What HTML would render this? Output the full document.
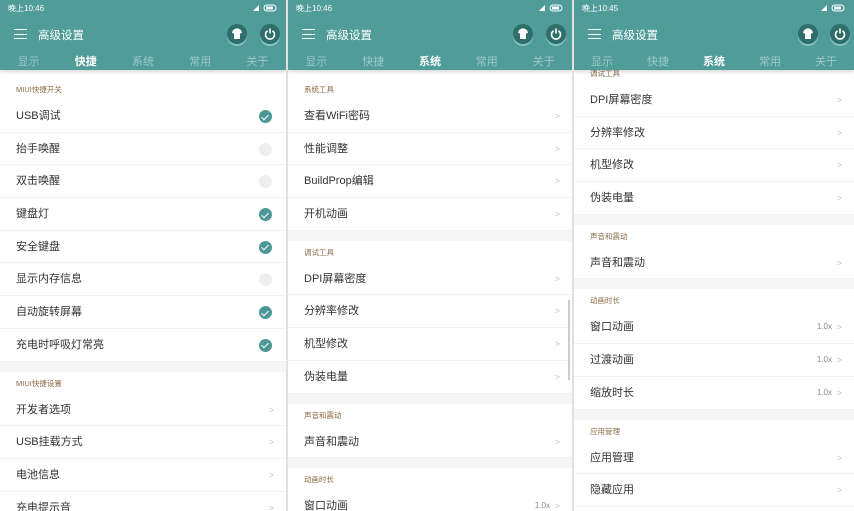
<!DOCTYPE html>
<html><head><meta charset="utf-8"><style>
*{margin:0;padding:0;box-sizing:border-box}
body{width:854px;height:511px;overflow:hidden;background:#e0e0e0;font-family:"Liberation Sans","Noto Sans CJK SC",sans-serif;position:relative}
.p{position:absolute;top:0;height:511px;overflow:hidden;background:#fff}
.hd{position:absolute;left:0;top:0;right:0;height:70px;background:#4f9c99;z-index:2;box-shadow:0 2px 3px rgba(0,0,0,.15)}
.sb{position:absolute;left:8px;top:3px;font-size:8px;color:#fff}
.si{position:absolute;right:8px;top:4px;width:26px;height:8px}
.ham{position:absolute;left:14px;top:29px;width:13px;height:10px;border-top:1.5px solid #fff;border-bottom:1.5px solid #fff}
.ham:after{content:"";position:absolute;left:0;right:0;top:3.5px;border-top:1.5px solid #fff}
.ti{position:absolute;left:38px;top:27px;font-size:11.5px;color:#fff}
.ic{position:absolute;top:24px;width:20px;height:20px;border-radius:50%;background:#2e6e6b;box-shadow:0 2px 0 #8cc4c1}
.tabs{position:absolute;left:0;right:0;top:53px;display:flex}
.tabs div{flex:1;text-align:center;font-size:11px;color:rgba(255,255,255,.45)}
.tabs div.a{color:#fff;font-weight:bold}
.c{position:absolute;left:0;right:0}
.h{height:22px;font-size:7.5px;color:#8a6a45;padding:6px 0 0 16px}
.i{height:32.7px;line-height:32.7px;font-size:11px;color:#333;padding-left:16px;border-bottom:1px solid #f2f2f2;position:relative}
.g{height:10px;background:#f6f6f6}
.ck{position:absolute;right:14px;top:10px;width:13px;height:13px;border-radius:50%;background:#4d9896}
.ck:after{content:"";position:absolute;left:4px;top:2.5px;width:3px;height:6px;border:solid #fff;border-width:0 1.6px 1.6px 0;transform:rotate(45deg)}
.un{position:absolute;right:14px;top:10px;width:13px;height:13px;border-radius:50%;background:#eeeeee}
.ch{position:absolute;right:12px;top:0;font-size:9px;color:#c4c4c4}
.v{position:absolute;right:22px;top:0;font-size:8px;color:#888}
</style></head><body>

<!-- panel 1 -->
<div class="p" style="left:0;width:286px">
<div class="hd"><div class="sb">晚上10:46</div>
<svg class="si" viewBox="0 0 26 8"><path d="M1 7L7 1V7Z" fill="#fff"/><rect x="12" y="1" width="12" height="6" rx="3" fill="none" stroke="#fff"/><rect x="14" y="2.5" width="7" height="3" fill="#fff"/></svg>
<div class="ham"></div><div class="ti">高级设置</div>
<div class="ic" style="left:227px"><svg width="20" height="20" viewBox="0 0 20 20"><path d="M6 6l2.5-1.5h3L14 6l1 3-2 .5V15H7V9.5L5 9z" fill="#fff"/></svg></div>
<div class="ic" style="left:260px"><svg width="20" height="20" viewBox="0 0 20 20"><path d="M7.5 6.8a4.5 4.5 0 1 0 5 0" fill="none" stroke="#fff" stroke-width="1.6"/><path d="M10 4.5v5" stroke="#fff" stroke-width="1.6"/></svg></div>
<div class="tabs"><div>显示</div><div class="a">快捷</div><div>系统</div><div>常用</div><div>关于</div></div></div>
<div class="c" style="top:78px">
<div class="h">MIUI快捷开关</div>
<div class="i">USB调试<span class="ck"></span></div>
<div class="i">抬手唤醒<span class="un"></span></div>
<div class="i">双击唤醒<span class="un"></span></div>
<div class="i">键盘灯<span class="ck"></span></div>
<div class="i">安全键盘<span class="ck"></span></div>
<div class="i">显示内存信息<span class="un"></span></div>
<div class="i">自动旋转屏幕<span class="ck"></span></div>
<div class="i">充电时呼吸灯常亮<span class="ck"></span></div>
<div class="g"></div>
<div class="h">MIUI快捷设置</div>
<div class="i">开发者选项<span class="ch">&gt;</span></div>
<div class="i">USB挂载方式<span class="ch">&gt;</span></div>
<div class="i">电池信息<span class="ch">&gt;</span></div>
<div class="i">充电提示音<span class="ch">&gt;</span></div>
</div></div>

<!-- panel 2 -->
<div class="p" style="left:288px;width:284px">
<div class="hd"><div class="sb">晚上10:46</div>
<svg class="si" viewBox="0 0 26 8"><path d="M1 7L7 1V7Z" fill="#fff"/><rect x="12" y="1" width="12" height="6" rx="3" fill="none" stroke="#fff"/><rect x="14" y="2.5" width="7" height="3" fill="#fff"/></svg>
<div class="ham"></div><div class="ti">高级设置</div>
<div class="ic" style="left:225px"><svg width="20" height="20" viewBox="0 0 20 20"><path d="M6 6l2.5-1.5h3L14 6l1 3-2 .5V15H7V9.5L5 9z" fill="#fff"/></svg></div>
<div class="ic" style="left:258px"><svg width="20" height="20" viewBox="0 0 20 20"><path d="M7.5 6.8a4.5 4.5 0 1 0 5 0" fill="none" stroke="#fff" stroke-width="1.6"/><path d="M10 4.5v5" stroke="#fff" stroke-width="1.6"/></svg></div>
<div class="tabs"><div>显示</div><div>快捷</div><div class="a">系统</div><div>常用</div><div>关于</div></div></div>
<div class="c" style="top:78px">
<div class="h">系统工具</div>
<div class="i">查看WiFi密码<span class="ch">&gt;</span></div>
<div class="i">性能调整<span class="ch">&gt;</span></div>
<div class="i">BuildProp编辑<span class="ch">&gt;</span></div>
<div class="i">开机动画<span class="ch">&gt;</span></div>
<div class="g"></div>
<div class="h">调试工具</div>
<div class="i">DPI屏幕密度<span class="ch">&gt;</span></div>
<div class="i">分辨率修改<span class="ch">&gt;</span></div>
<div class="i">机型修改<span class="ch">&gt;</span></div>
<div class="i">伪装电量<span class="ch">&gt;</span></div>
<div class="g"></div>
<div class="h">声音和震动</div>
<div class="i">声音和震动<span class="ch">&gt;</span></div>
<div class="g"></div>
<div class="h">动画时长</div>
<div class="i">窗口动画<span class="v">1.0x</span><span class="ch">&gt;</span></div>
</div>
<div style="position:absolute;left:280px;top:300px;width:2px;height:80px;background:#ccc"></div>
</div>

<!-- panel 3 -->
<div class="p" style="left:574px;width:280px">
<div class="hd"><div class="sb">晚上10:45</div>
<svg class="si" viewBox="0 0 26 8"><path d="M1 7L7 1V7Z" fill="#fff"/><rect x="12" y="1" width="12" height="6" rx="3" fill="none" stroke="#fff"/><rect x="14" y="2.5" width="7" height="3" fill="#fff"/></svg>
<div class="ham"></div><div class="ti">高级设置</div>
<div class="ic" style="left:224px"><svg width="20" height="20" viewBox="0 0 20 20"><path d="M6 6l2.5-1.5h3L14 6l1 3-2 .5V15H7V9.5L5 9z" fill="#fff"/></svg></div>
<div class="ic" style="left:256px"><svg width="20" height="20" viewBox="0 0 20 20"><path d="M7.5 6.8a4.5 4.5 0 1 0 5 0" fill="none" stroke="#fff" stroke-width="1.6"/><path d="M10 4.5v5" stroke="#fff" stroke-width="1.6"/></svg></div>
<div class="tabs"><div>显示</div><div>快捷</div><div class="a">系统</div><div>常用</div><div>关于</div></div></div>
<div class="c" style="top:62px">
<div class="h">调试工具</div>
<div class="i">DPI屏幕密度<span class="ch">&gt;</span></div>
<div class="i">分辨率修改<span class="ch">&gt;</span></div>
<div class="i">机型修改<span class="ch">&gt;</span></div>
<div class="i">伪装电量<span class="ch">&gt;</span></div>
<div class="g"></div>
<div class="h">声音和震动</div>
<div class="i">声音和震动<span class="ch">&gt;</span></div>
<div class="g"></div>
<div class="h">动画时长</div>
<div class="i">窗口动画<span class="v">1.0x</span><span class="ch">&gt;</span></div>
<div class="i">过渡动画<span class="v">1.0x</span><span class="ch">&gt;</span></div>
<div class="i">缩放时长<span class="v">1.0x</span><span class="ch">&gt;</span></div>
<div class="g"></div>
<div class="h">应用管理</div>
<div class="i">应用管理<span class="ch">&gt;</span></div>
<div class="i">隐藏应用<span class="ch">&gt;</span></div>
</div></div>
</body></html>
